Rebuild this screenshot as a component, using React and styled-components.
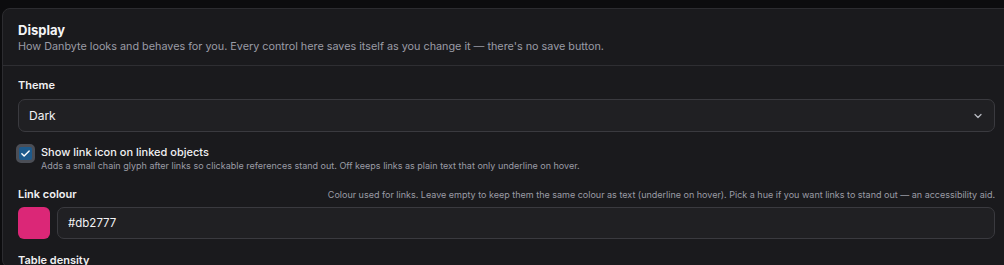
import React, { useState } from 'react';
import styled, { createGlobalStyle } from 'styled-components';

const GlobalStyle = createGlobalStyle`
  html, body {
    margin: 0;
    background: #0c0c0e;
    overflow: hidden;
  }
  body {
    padding: 8px 0 0 2px;
    font-family: Inter, "Noto Sans", sans-serif;
    color: #ececef;
  }
`;

const Card = styled.section`
  width: 1016px;
  background: #1a1a1d;
  border: 1px solid #2c2c30;
  border-radius: 8px;
`;

const Header = styled.div`
  padding: 12px 15px 10px;
  border-bottom: 1px solid #2e2e32;
`;

const Title = styled.h2`
  margin: 0;
  font-size: 13px;
  font-weight: 700;
  line-height: 18px;
  color: #f4f4f6;
`;

const Subtitle = styled.p`
  margin: 0;
  font-size: 10.8px;
  line-height: 16px;
  color: #9a9ca6;
`;

const Body = styled.div`
  padding: 12px 9px 0 15px;
  display: flex;
  flex-direction: column;
  gap: 14px;
  width: 977px;
`;

const Field = styled.div`
  display: flex;
  flex-direction: column;
  gap: ${({ tight }) => (tight ? '6px' : '7px')};
`;

const LabelRow = styled.div`
  display: flex;
  align-items: baseline;
  justify-content: space-between;
`;

const Label = styled.label`
  font-size: 11px;
  font-weight: 600;
  line-height: 14px;
  color: #f1f1f3;
`;

const Help = styled.span`
  font-size: 9px;
  color: #9a9ca6;
`;

const SelectBox = styled.div`
  position: relative;
  height: 31px;
  border: 1px solid #3a3a3f;
  border-radius: 7px;
  background: #202023;
  display: flex;
  align-items: center;
  padding: 0 10px;
  font-size: 12px;
  color: #f2f2f4;
`;

const Chevron = styled.svg`
  margin-left: auto;
  width: 12px;
  height: 12px;
  color: #b8bac2;
`;

const CheckRow = styled.div`
  display: flex;
  gap: 6px;
  align-items: flex-start;
  margin-top: -1px;
`;

const CheckBox = styled.button`
  flex: none;
  width: 19px;
  height: 19px;
  padding: 0;
  margin-top: -1px;
  margin-left: -2px;
  border-radius: 5px;
  border: 3px solid #4b4e56;
  background: #1d5a8c;
  display: flex;
  align-items: center;
  justify-content: center;
  cursor: pointer;
`;

const CheckText = styled.div`
  display: flex;
  flex-direction: column;
`;

const CheckTitle = styled.span`
  font-size: 11px;
  font-weight: 500;
  line-height: 14px;
  color: #f1f1f3;
`;

const CheckDesc = styled.span`
  font-size: 9px;
  line-height: 14px;
  color: #9a9ca6;
`;

const ColourRow = styled.div`
  display: flex;
  gap: 7px;
`;

const Swatch = styled.div`
  flex: none;
  width: 32px;
  height: 32px;
  border-radius: 6px;
  background: ${({ color }) => color};
`;

const TextInput = styled.input`
  flex: 1;
  height: 32px;
  box-sizing: border-box;
  border: 1px solid #3a3a3f;
  border-radius: 7px;
  background: #202023;
  padding: 0 10px;
  font-family: inherit;
  font-size: 11.5px;
  color: #f2f2f4;
  outline: none;
`;

export default function App() {
  const [showIcon, setShowIcon] = useState(true);
  const [colour, setColour] = useState('#db2777');

  return (
    <>
      <GlobalStyle />
      <Card>
        <Header>
          <Title>Display</Title>
          <Subtitle>
            How Danbyte looks and behaves for you. Every control here saves itself as you change it — there's no save button.
          </Subtitle>
        </Header>
        <Body>
          <Field>
            <Label>Theme</Label>
            <SelectBox>
              Dark
              <Chevron viewBox="0 0 24 24" fill="none" stroke="currentColor" strokeWidth="2.5" strokeLinecap="round" strokeLinejoin="round">
                <path d="M6 9l6 6 6-6" />
              </Chevron>
            </SelectBox>
          </Field>
          <CheckRow>
            <CheckBox onClick={() => setShowIcon(!showIcon)} aria-checked={showIcon}>
              {showIcon && (
                <svg width="11" height="11" viewBox="0 0 24 24" fill="none" stroke="#fff" strokeWidth="3" strokeLinecap="round" strokeLinejoin="round">
                  <path d="M4 12.5l5 5L20 6.5" />
                </svg>
              )}
            </CheckBox>
            <CheckText>
              <CheckTitle>Show link icon on linked objects</CheckTitle>
              <CheckDesc>
                Adds a small chain glyph after links so clickable references stand out. Off keeps links as plain text that only underline on hover.
              </CheckDesc>
            </CheckText>
          </CheckRow>
          <Field tight>
            <LabelRow>
              <Label>Link colour</Label>
              <Help>
                Colour used for links. Leave empty to keep them the same colour as text (underline on hover). Pick a hue if you want links to stand out — an accessibility aid.
              </Help>
            </LabelRow>
            <ColourRow>
              <Swatch color={colour} />
              <TextInput value={colour} onChange={e => setColour(e.target.value)} />
            </ColourRow>
          </Field>
          <Field>
            <Label>Table density</Label>
          </Field>
        </Body>
      </Card>
    </>
  );
}
